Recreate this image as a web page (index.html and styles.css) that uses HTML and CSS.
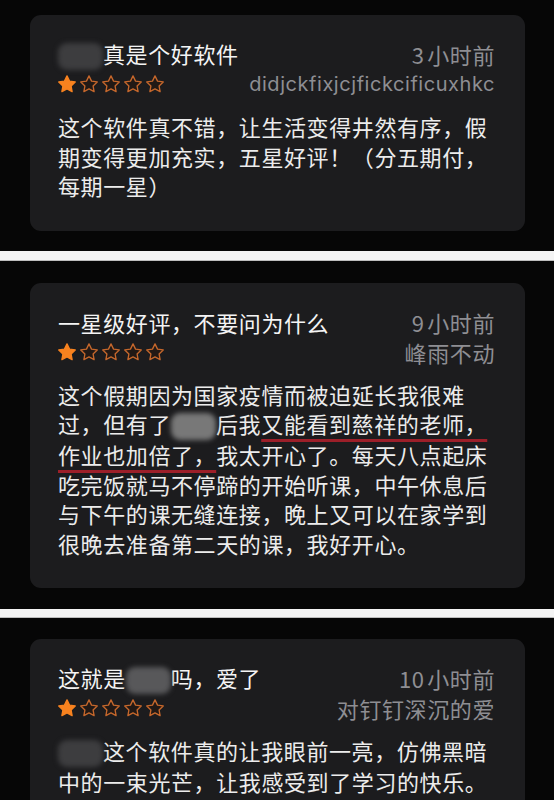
FILE: index.html
```html
<!DOCTYPE html>
<html lang="zh-CN">
<head>
<meta charset="utf-8">
<title>评论</title>
<link rel="stylesheet" href="styles.css">
</head>
<body>
<svg class="defs" width="0" height="0" aria-hidden="true">
  <symbol id="star" viewBox="2 2.2 20 19.6">
    <path d="M12 3l2.8 5.8 6.35.9-4.6 4.45 1.1 6.3L12 17.5l-5.65 2.95 1.1-6.3-4.6-4.45 6.35-.9z"/>
  </symbol>
</svg>

<section class="panel panel-first">
  <article class="card">
    <div class="row">
      <div class="title"><span class="blur blur-dark"></span>真是个好软件</div>
      <div class="meta">3 小时前</div>
    </div>
    <div class="row">
      <div class="stars">
        <svg class="star on"><use href="#star"/></svg>
        <svg class="star"><use href="#star"/></svg>
        <svg class="star"><use href="#star"/></svg>
        <svg class="star"><use href="#star"/></svg>
        <svg class="star"><use href="#star"/></svg>
      </div>
      <div class="meta user-latin">didjckfixjcjfickcificuxhkc</div>
    </div>
    <p class="body">这个软件真不错，让生活变得井然有序，假期变得更加充实，五星好评！（分五期付，每期一星）</p>
  </article>
</section>

<div class="band band-first"></div>

<section class="panel panel-second">
  <article class="card">
    <div class="row">
      <div class="title">一星级好评，不要问为什么</div>
      <div class="meta">9 小时前</div>
    </div>
    <div class="row">
      <div class="stars">
        <svg class="star on"><use href="#star"/></svg>
        <svg class="star"><use href="#star"/></svg>
        <svg class="star"><use href="#star"/></svg>
        <svg class="star"><use href="#star"/></svg>
        <svg class="star"><use href="#star"/></svg>
      </div>
      <div class="meta">峰雨不动</div>
    </div>
    <p class="body">这个假期因为国家疫情而被迫延长我很难过，但有了<span class="blur blur-light"></span>后我<span class="mark">又能看到慈祥的老师，作业也加倍了，</span>我太开心了。每天八点起床吃完饭就马不停蹄的开始听课，中午休息后与下午的课无缝连接，晚上又可以在家学到很晚去准备第二天的课，我好开心。</p>
  </article>
</section>

<div class="band band-second"></div>

<section class="panel panel-third">
  <article class="card">
    <div class="row">
      <div class="title">这就是<span class="blur blur-mid"></span>吗，爱了</div>
      <div class="meta">10 小时前</div>
    </div>
    <div class="row">
      <div class="stars">
        <svg class="star on"><use href="#star"/></svg>
        <svg class="star"><use href="#star"/></svg>
        <svg class="star"><use href="#star"/></svg>
        <svg class="star"><use href="#star"/></svg>
        <svg class="star"><use href="#star"/></svg>
      </div>
      <div class="meta">对钉钉深沉的爱</div>
    </div>
    <p class="body"><span class="blur blur-dark"></span>这个软件真的让我眼前一亮，仿佛黑暗中的一束光芒，让我感受到了学习的快乐。</p>
  </article>
</section>
</body>
</html>
```

FILE: styles.css
```css
html, body {
  margin: 0;
  padding: 0;
}

body {
  background: #f3f3f3;
  font-family: "Noto Sans CJK SC", "Noto Sans", sans-serif;
  font-size: 22px;
  letter-spacing: 0.6px;
  color: #ededed;
  overflow: hidden;
}

.defs {
  position: absolute;
  width: 0;
  height: 0;
}

.panel {
  background: #060606;
  padding: 0 29px 0 30px;
}

.panel-first {
  padding-top: 15px;
  padding-bottom: 20px;
}

.panel-second {
  padding-top: 22px;
  padding-bottom: 21px;
}

.panel-third {
  padding-top: 21px;
  padding-bottom: 40px;
}

.band {
  background: #f4f4f4;
  border-bottom: 1px solid #bdbdbd;
}

.band-first {
  height: 9px;
}

.band-second {
  height: 8px;
}

.card {
  background: #1c1c1e;
  border-radius: 11px;
  padding: 24px 30px 30px 28px;
}

.row {
  display: flex;
  justify-content: space-between;
  align-items: center;
  height: 30px;
  line-height: 30px;
}

.title {
  color: #f4f4f4;
  white-space: nowrap;
}

.meta {
  color: #8e8e93;
  white-space: nowrap;
  word-spacing: -3px;
}

.user-latin {
  font-family: Inter, "Liberation Sans", sans-serif;
  font-size: 20px;
  letter-spacing: 0.55px;
}

.stars {
  display: flex;
  gap: 4px;
  align-items: center;
}

.star {
  width: 18px;
  height: 18px;
  fill: #221915;
  stroke: #c5672c;
  stroke-width: 1.5;
  stroke-linejoin: round;
}

.star.on {
  fill: #f7821f;
  stroke: #f7821f;
}

.body {
  margin: 13px 0 0 0;
  line-height: 29.5px;
  width: 440px;
  color: #ececec;
}

.blur {
  display: inline-block;
  width: 45px;
  height: 27px;
  border-radius: 9px;
  vertical-align: -7px;
  filter: blur(2.5px);
}

.blur-dark {
  background: #3d3d3f;
}

.blur-mid {
  background: #58585a;
}

.blur-light {
  background: #787878;
}

.mark {
  text-decoration: underline;
  text-decoration-color: #9c1f29;
  text-decoration-thickness: 2.5px;
  text-underline-offset: 6px;
}
```
